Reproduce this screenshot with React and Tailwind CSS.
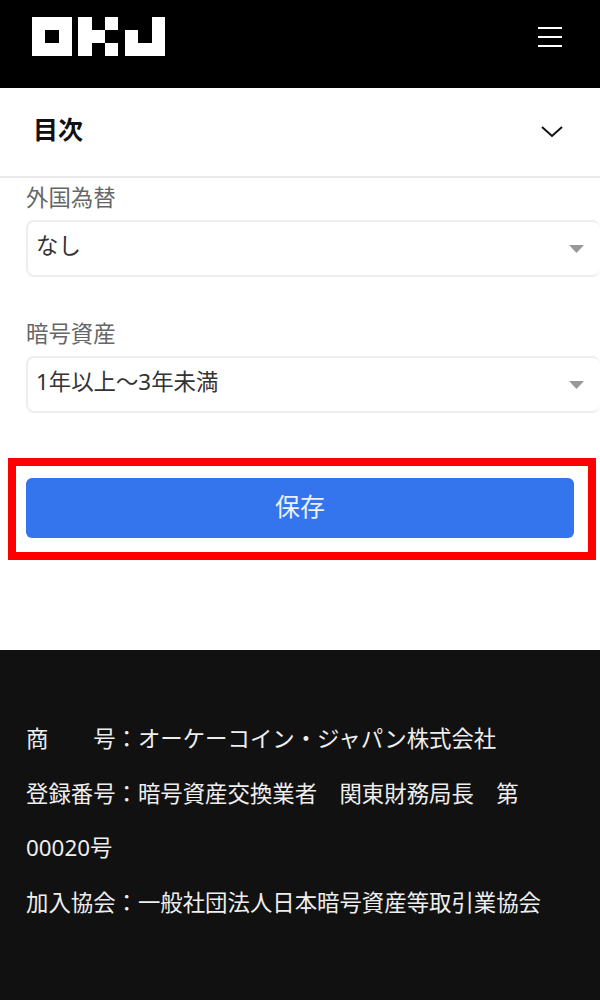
import React from 'react';

const jp = "font-['Noto_Sans','Noto_Sans_CJK_JP',sans-serif]";

const Logo = () => (
  <svg width="133" height="39" viewBox="0 0 133 39" fill="#fff">
    <path fillRule="evenodd" d="M0 0h40v39H0zM13 13v13h14V13z" />
    <path d="M46 0h14v39H46zM60 13h13v13H60zM73 0h13v13H73zM73 26h13v13H73z" />
    <path d="M93 13h13v13h14V0h13v39H93z" />
  </svg>
);

const Field = ({ label, value }) => (
  <div className="flex flex-col">
    <label className="text-[22.4px] leading-[40px] text-[#666]">{label}</label>
    <div className="mt-[2px] flex h-[57px] items-center justify-between rounded-lg border-2 border-r-0 border-[#eeeeee] pl-[8px] pr-[16px] text-[22.4px] text-[#333]">
      <span className="pb-[6px]">{value}</span>
      <svg width="15" height="8" viewBox="0 0 15 8"><path d="M0 0h15l-7.5 8z" fill="#999" /></svg>
    </div>
  </div>
);

export default function App() {
  return (
    <div className={`${jp} min-h-[1000px] bg-white`}>
      <header className="flex h-[88px] items-start justify-between bg-black pl-8 pr-[38px] pt-[17px]">
        <Logo />
        <div className="mt-[10px] flex flex-col gap-[7px]">
          <div className="h-[2px] w-6 bg-white" />
          <div className="h-[2px] w-6 bg-white" />
          <div className="h-[2px] w-6 bg-white" />
        </div>
      </header>

      <div className="flex h-[90px] items-center justify-between border-b-2 border-[#eaeaea] pl-[33px] pr-[37px]">
        <h2 className="pb-[5px] text-[25px] font-bold text-[#111]">目次</h2>
        <svg width="22" height="12" viewBox="0 0 22 12" fill="none" stroke="#111" strokeWidth="2">
          <path d="M1 1l10 9 10-9" />
        </svg>
      </div>

      <div className="flex flex-col gap-[37px] pl-[26px]">
        <Field label="外国為替" value="なし" />
        <Field label="暗号資産" value="1年以上～3年未満" />
      </div>

      <div className="ml-2 mr-1 mt-[45px] border-8 border-[#ff0000] pb-[14px] pl-[10px] pr-[14px] pt-3">
        <button className="h-[60px] w-full rounded-md bg-[#3474ec] pb-[3px] text-[25px] text-white/90">保存</button>
      </div>

      <footer className="mt-[90px] h-[350px] bg-[#111] px-[26px] pt-[62px] text-[22.4px] leading-[54.6px] text-[#eee]">
        <p>商　　号：オーケーコイン・ジャパン株式会社</p>
        <p>登録番号：暗号資産交換業者　関東財務局長　第00020号</p>
        <p>加入協会：一般社団法人日本暗号資産等取引業協会</p>
      </footer>
    </div>
  );
}
